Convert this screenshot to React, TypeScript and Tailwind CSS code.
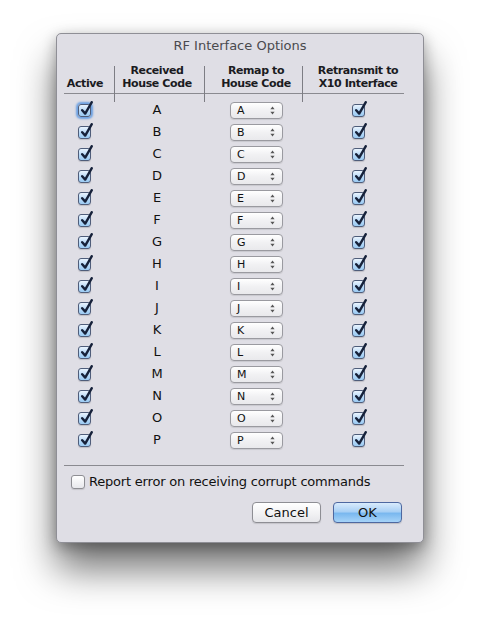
import React from "react";

const letters = "ABCDEFGHIJKLMNOP".split("");

function CheckBox({ focus = false, checked = true }: { focus?: boolean; checked?: boolean }) {
  if (!checked) {
    return (
      <div className="relative w-[14px] h-[14px] rounded-[3px] border border-[#8e8e93] bg-[linear-gradient(#ffffff,#e8e8ec)] shadow-[0_1px_1px_rgba(0,0,0,0.12)]" />
    );
  }
  return (
    <div
      className={
        "relative w-[13px] h-[13px] rounded-[3px] border border-[#4f5d7a] bg-[linear-gradient(#eaf4fe,#b6d8f7_55%,#9bcbf3)] " +
        (focus ? "shadow-[0_0_2px_2px_rgba(70,140,225,0.75)]" : "shadow-[0_1px_1px_rgba(0,0,0,0.15)]")
      }
    >
      <svg className="absolute left-[1px] top-[-4px]" width="14" height="16" viewBox="0 0 14 16">
        <path d="M2.2 9.2 L5.2 12.6 L11.8 1.2" fill="none" stroke="#16213a" strokeWidth="2.4" strokeLinecap="round" strokeLinejoin="round" />
      </svg>
    </div>
  );
}

function Popup({ v }: { v: string }) {
  return (
    <div className="w-[53px] h-[17px] rounded-[4px] border border-[#9a9aa0] bg-[linear-gradient(#ffffff,#f1f1f3_50%,#e9e9ec)] shadow-[0_1px_1px_rgba(0,0,0,0.1)] flex items-center pl-[6px] pr-[7px] justify-between">
      <span className="text-[11px] leading-[13px] text-[#111]">{v}</span>
      <svg width="5" height="9" viewBox="0 0 5 9">
        <path d="M2.5 0.5 L4.6 3.3 L0.4 3.3 Z" fill="#555" />
        <path d="M2.5 8.5 L4.6 5.7 L0.4 5.7 Z" fill="#555" />
      </svg>
    </div>
  );
}

export default function App() {
  return (
    <div
      className="w-[480px] h-[621px] bg-white pl-[56px] pt-[33px]"
      style={{ fontFamily: '"DejaVu Sans", "Liberation Sans", sans-serif' }}
    >
      <div className="w-[368px] h-[510px] rounded-[5px] border border-[#8f8f96] bg-[#dfdee5] shadow-[0_26px_38px_rgba(0,0,0,0.55),0_4px_14px_rgba(0,0,0,0.3)] flex flex-col">
        <div className="mt-[4px] h-[16px] text-center text-[13px] leading-[16px] text-[#4a4a4e]">RF Interface Options</div>

        <div className="ml-[7px] w-[340px] grid grid-cols-[50px_90px_98px_102px] pt-[10px] pb-[3px] border-b border-[#8a8a90] text-[11px] leading-[13px] font-bold tracking-[-0.4px] text-[#1b1b1f]">
          <div className="pr-[8px] flex items-end justify-center">Active</div>
          <div className="relative pr-[4px] text-center">
            <div className="absolute left-0 top-[2px] w-px h-[36px] bg-[#7d7d84]" />
            Received<br />House Code
          </div>
          <div className="relative pl-[6px] text-center">
            <div className="absolute left-0 top-[2px] w-px h-[36px] bg-[#7d7d84]" />
            Remap to<br />House Code
          </div>
          <div className="relative pl-[10px] text-center">
            <div className="absolute left-0 top-[2px] w-px h-[36px] bg-[#7d7d84]" />
            Retransmit to<br />X10 Interface
          </div>
        </div>

        <div className="ml-[7px] w-[340px] mt-[5px] flex flex-col">
          {letters.map((l, i) => (
            <div key={l} className="grid grid-cols-[50px_90px_98px_102px] h-[22px] items-center">
              <div className="pl-[14px] flex">
                <CheckBox focus={i === 0} />
              </div>
              <div className="pr-[4px] text-center text-[13px] leading-[16px] text-[#111]">{l}</div>
              <div className="pl-[26px] flex">
                <Popup v={l} />
              </div>
              <div className="pl-[50px] flex">
                <CheckBox />
              </div>
            </div>
          ))}
        </div>

        <div className="ml-[7px] w-[340px] mt-[14px] h-px bg-[#8a8a90]" />

        <div className="mt-[8px] ml-[14px] h-[16px] flex items-center gap-[4px]">
          <CheckBox checked={false} />
          <span className="text-[13px] leading-[16px] tracking-[-0.2px] text-[#111]">Report error on receiving corrupt commands</span>
        </div>

        <div className="mt-[12px] pr-[21px] flex justify-end gap-[12px]">
          <button className="w-[69px] h-[21px] rounded-[4px] border border-[#8e8e94] bg-[linear-gradient(#ffffff,#f3f3f5_50%,#e6e6ea)] shadow-[0_1px_1px_rgba(0,0,0,0.12)] text-[13px] leading-[16px] text-[#111]">
            Cancel
          </button>
          <button className="w-[69px] h-[21px] rounded-[4px] border border-[#4e68a0] bg-[linear-gradient(#d9ebfc,#a9d0f5_45%,#7ab8ef_55%,#a6d3f8)] shadow-[0_1px_1px_rgba(0,0,0,0.15)] text-[13px] leading-[16px] text-[#111]">
            OK
          </button>
        </div>
      </div>
    </div>
  );
}
